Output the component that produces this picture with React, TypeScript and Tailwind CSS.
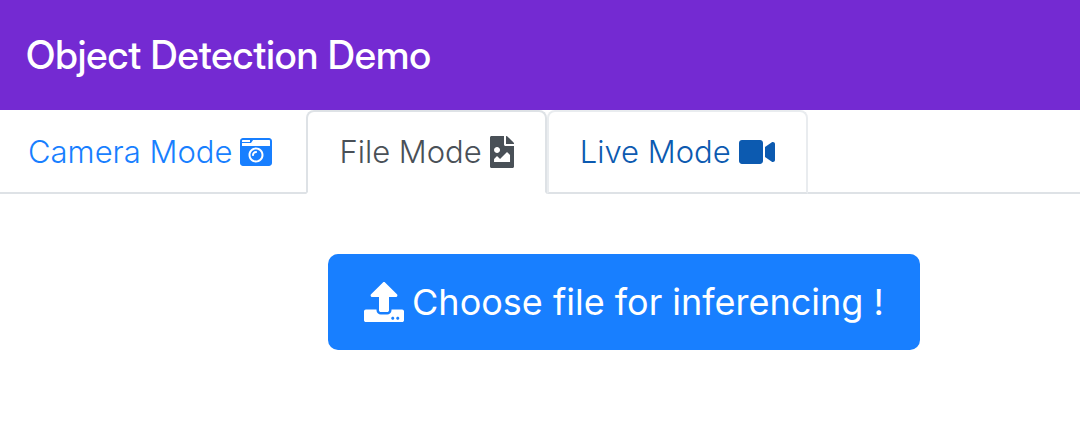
import { FaCameraRetro, FaFileImage, FaVideo, FaUpload } from "react-icons/fa";

export default function App() {
  return (
    <div className="font-['Inter',sans-serif]">
      <header className="flex h-[110px] items-center bg-[#742ad2] px-[26px]">
        <h1 className="font-['Inter_Display','Inter',sans-serif] text-[39px] leading-[56px] font-medium text-white">Object Detection Demo</h1>
      </header>
      <nav className="flex h-[84px] border-b-2 border-[#dee2e6] text-[31px] leading-[48px] font-[350]">
        <a href="#camera" className="flex h-[84px] items-center gap-2 pr-[34px] pl-7 text-[#187fff]">
          <span>Camera Mode</span>
          <FaCameraRetro className="h-8 w-8" />
        </a>
        <a
          href="#file"
          aria-current="page"
          className="flex h-[84px] items-center gap-2 rounded-t-lg border-2 border-[#dee2e6] border-b-white bg-white px-[31px] text-[#495057]"
        >
          <span>File Mode</span>
          <FaFileImage className="h-8 w-6" />
        </a>
        <a
          href="#live"
          className="flex h-[84px] items-center gap-2 rounded-t-lg border-2 border-[#e9ecef] border-b-[#dee2e6] px-[31px] text-[#0c5ab0]"
        >
          <span>Live Mode</span>
          <FaVideo className="h-8 w-9" />
        </a>
      </nav>
      <main className="flex justify-center pt-[60px] pl-[168px]">
        <button
          type="button"
          className="flex h-24 items-center gap-2 rounded-[10px] bg-[#187fff] px-9 text-[36px] leading-[60px] text-white"
        >
          <FaUpload className="h-10 w-10" />
          <span>Choose file for inferencing !</span>
        </button>
      </main>
    </div>
  );
}
